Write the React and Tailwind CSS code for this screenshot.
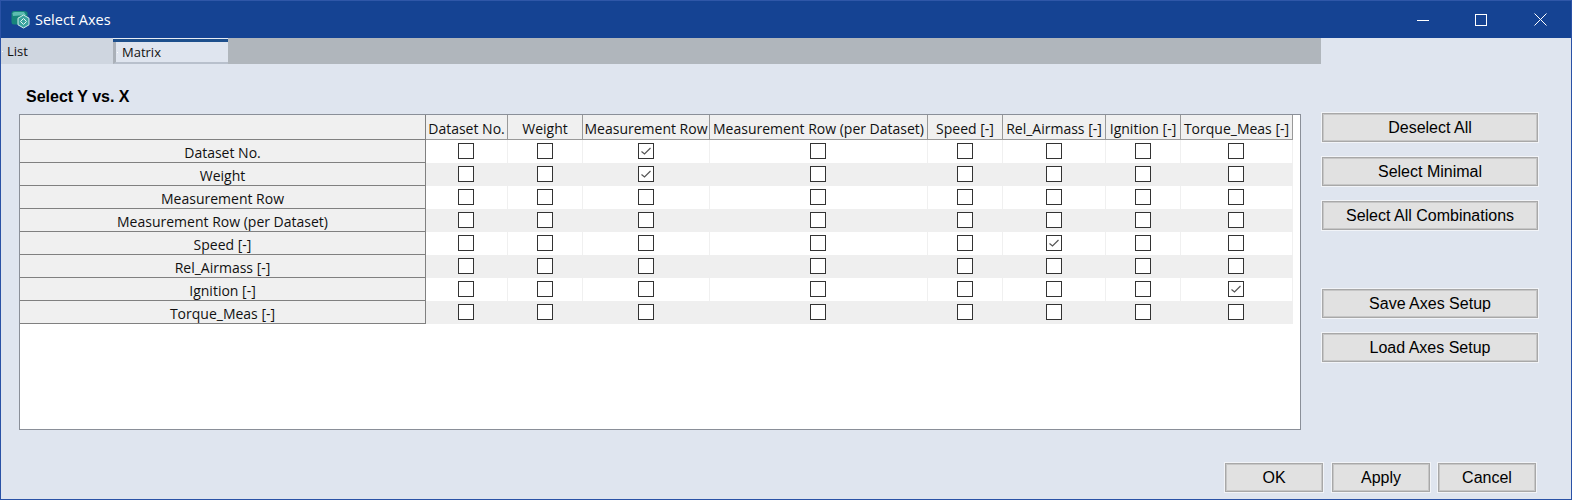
const columns = ["Dataset No.", "Weight", "Measurement Row", "Measurement Row (per Dataset)", "Speed [-]", "Rel_Airmass [-]", "Ignition [-]", "Torque_Meas [-]"];

// even width columns need a nudge so the box lands on the same pixel
const cellPad = ["pr-px", "", "", "pr-px", "", "", "", "pr-px"];

// row index -> checked column index
const checked = { 0: [2], 1: [2], 4: [5], 6: [7] };

function Checkbox({ on }) {
  return (
    <span className="flex h-4 w-4 items-center justify-center border border-[#333333] bg-white">
      {on && (
        <svg width="14" height="14" viewBox="0 0 14 14" fill="none">
          <path d="M2.5 7.5 L5.5 10 L11.5 4" stroke="#555555" strokeWidth="1.2" />
        </svg>
      )}
    </span>
  );
}

function Button({ children, className = "" }) {
  return (
    <button className={`flex h-[31px] items-center justify-center border border-[#f2f4f8] bg-[#e1e1e1] font-['Liberation_Sans',sans-serif] text-[16px] text-black shadow-[inset_0_0_0_1px_#a8a8a8,inset_0_0_0_2px_#c6c6c6] ${className}`}>
      {children}
    </button>
  );
}

function AppIcon() {
  return (
    <svg width="19" height="19" viewBox="0 0 19 19">
      <path d="M0.5 3.5 Q0.5 1 3 1 L13 1 Q15.5 1 16.5 2.5 L16.5 12 Q12 14.5 6 14.5 L3 14.5 Q0.5 14.5 0.5 12 Z" fill="#17857b" />
      <path d="M1.5 3.5 Q1.5 2 4 2 L13 2 L15 5 L2 6 Z" fill="#5cbcb0" />
      <path d="M12.5 5 L18 8.2 L18 14.8 L12.5 18 L7 14.8 L7 8.2 Z" fill="#3ba39e" stroke="#d6efec" strokeWidth="1" />
      <path d="M12.5 8.5 L15.5 11.5 L12.5 14.5 L9.5 11.5 Z" fill="none" stroke="#e3f5f3" strokeWidth="1" />
    </svg>
  );
}

export default function App() {
  return (
    <div className="flex h-[500px] w-[1572px] flex-col overflow-hidden border border-[#2a52a6] border-t-[#2f57a8] bg-[#dfe5ef] font-['Open_Sans',sans-serif] text-[#111111]">
      {/* title bar */}
      <div className="flex h-[37px] shrink-0 items-center bg-[#154393] pl-[10px] text-white">
        <AppIcon />
        <span className="ml-[5px] text-[14.5px]">Select Axes</span>
        <div className="ml-auto flex items-center">
          <svg width="12" height="12" viewBox="0 0 12 12" className="mr-[46px]">
            <path d="M0 6.5 H12" stroke="#ffffff" />
          </svg>
          <svg width="12" height="12" viewBox="0 0 12 12" className="mr-[47px]">
            <rect x="0.5" y="0.5" width="11" height="11" fill="none" stroke="#ffffff" />
          </svg>
          <svg width="13" height="13" viewBox="0 0 13 13" className="mr-[24px]">
            <path d="M0.5 0.5 L12.5 12.5 M12.5 0.5 L0.5 12.5" stroke="#ffffff" />
          </svg>
        </div>
      </div>

      {/* tabs */}
      <div className="flex h-[26px] w-[1320px] shrink-0 bg-[#b0b6bc] text-[13px] leading-none">
        <div className="flex w-[112px] items-center bg-[#cfd6e0] pl-[1px]">
          <span className="h-px w-px bg-white" />
          <span className="ml-[4px]">List</span>
        </div>
        <div className="flex w-[115px] flex-col">
          <div className="h-px shrink-0 bg-[#e8edf4]" />
          <div className="h-[3px] shrink-0 bg-[#1d4f8c]" />
          <div className="flex flex-1 items-center border-b-[2px] border-l-[3px] border-b-[#b8c0cc] border-l-[#aab0b8] bg-[#dfe5ef] pl-[1px]">
            <span className="h-px w-px bg-white" />
            <span className="ml-[4px]">Matrix</span>
          </div>
        </div>
      </div>

      {/* content */}
      <div className="flex min-h-0 flex-1">
        <div className="flex w-[1320px] flex-col pl-[18px]">
          <div className="mt-[24px] ml-[7px] h-[17px] font-['Liberation_Sans',sans-serif] text-[16px] leading-[17px] font-bold text-black">
            Select Y vs. X
          </div>
          <div className="mt-[9px] h-[316px] w-[1282px] border border-[#8a8f98] bg-white">
            <div className="grid grid-cols-[406px_82px_75px_127px_218px_75px_103px_75px_112px] grid-rows-[25px_repeat(8,23px)] text-[14px] leading-none">
              <div className="border-r border-b border-[#808080] bg-[#f0f0f0]" />
              {columns.map((name) => (
                <div key={name} className="flex items-center justify-center overflow-hidden border-r border-b border-[#999999] bg-[#f0f0f0] pt-[3px] whitespace-nowrap">
                  {name}
                </div>
              ))}
              {columns.map((name, r) => (
                <Row key={name} name={name} r={r} />
              ))}
            </div>
          </div>
        </div>

        {/* side buttons */}
        <div className="flex w-[218px] flex-col pt-[48px]">
          <Button>Deselect All</Button>
          <Button className="mt-[13px]">Select Minimal</Button>
          <Button className="mt-[13px]">Select All Combinations</Button>
          <Button className="mt-[57px]">Save Axes Setup</Button>
          <Button className="mt-[13px]">Load Axes Setup</Button>
        </div>
      </div>

      {/* dialog buttons */}
      <div className="flex h-[37px] shrink-0 pl-[1223px]">
        <Button className="w-[100px]">OK</Button>
        <Button className="ml-[7px] w-[100px]">Apply</Button>
        <Button className="ml-[6px] w-[100px]">Cancel</Button>
      </div>
    </div>
  );
}

function Row({ name, r }) {
  const rowBg = r % 2 === 0 ? "bg-white border-[#f0f0f0]" : "bg-[#efefef] border-[#efefef]";
  return (
    <>
      <div className="flex items-center justify-center border-r border-b border-[#808080] bg-[#f0f0f0] pt-[3px]">{name}</div>
      {columns.map((col, c) => (
        <div key={col} className={`flex items-center justify-center border-r pb-px ${rowBg} ${cellPad[c]}`}>
          <Checkbox on={(checked[r] || []).includes(c)} />
        </div>
      ))}
    </>
  );
}
